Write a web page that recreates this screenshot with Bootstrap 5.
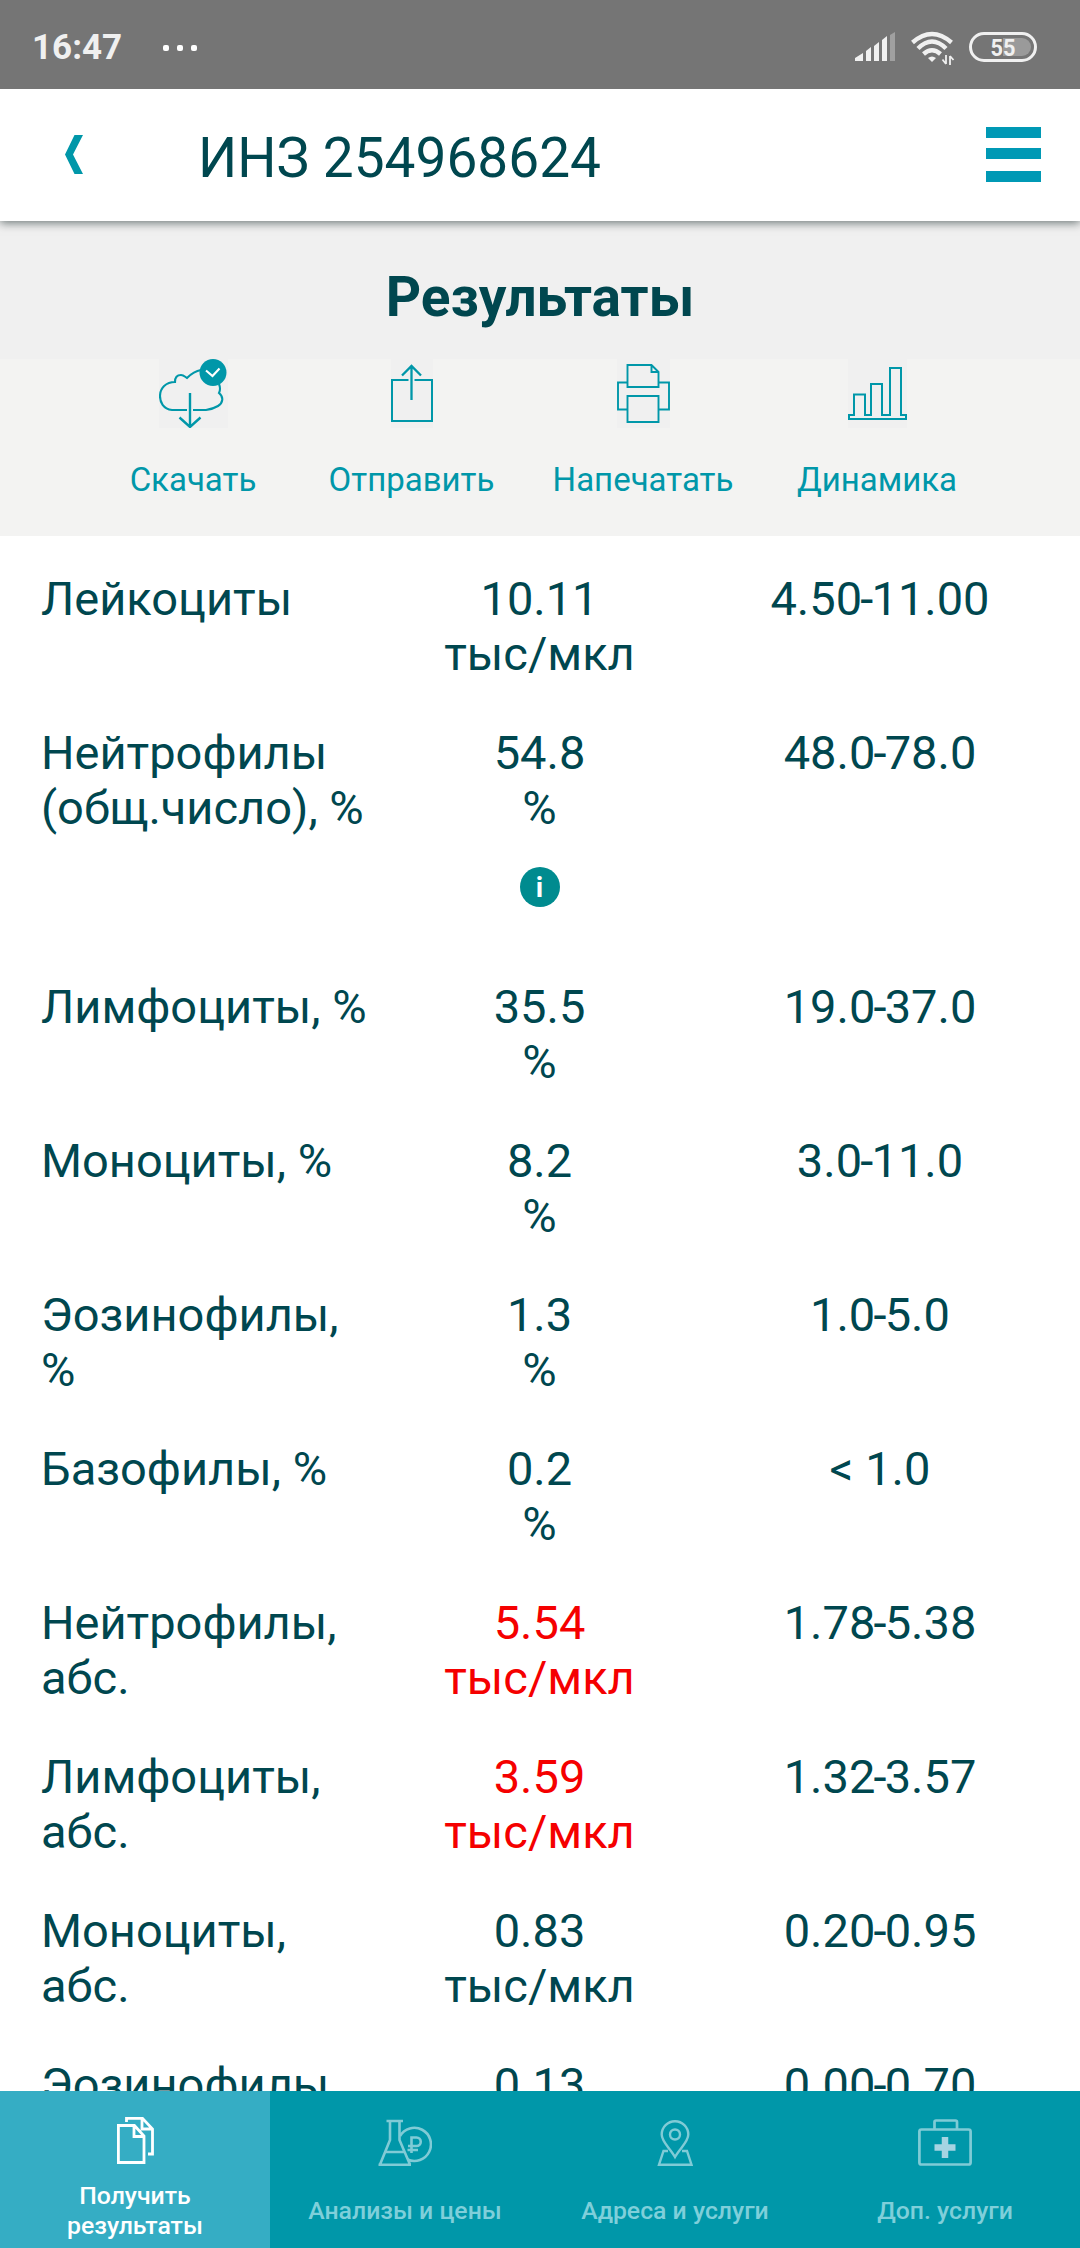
<!DOCTYPE html>
<html lang="ru">
<head>
<meta charset="utf-8">
<meta name="viewport" content="width=device-width, initial-scale=1">
<title>Результаты</title>
<link rel="stylesheet" href="https://cdn.jsdelivr.net/npm/bootstrap@5.3.0/dist/css/bootstrap.min.css">
<style>
:root{--ink:#00474f;--teal:#0097a9}
body{font-family:Roboto,"Noto Sans",sans-serif;color:var(--ink);background:#fff}
svg{display:block;flex:none}
.screen{width:1080px;height:2248px}
.statusbar{height:89px;background:#757575;color:#f0f0f0;padding:6px 43px 0 32px}
.clock{font-size:35px;font-weight:700;line-height:1}
.dots{margin-left:41px}
.appbar{height:132px;padding:0 39px 1px 65px;background:#fff;z-index:2;box-shadow:0 2px 9px rgba(0,20,20,.55);clip-path:inset(0 0 -20px 0)}
.appbar-title{font-size:55px;line-height:64px;margin-left:115px;padding-top:6px;font-weight:400}
.heading{height:138px;background:#f0f0f0;font-size:55px;font-weight:700;line-height:64px;padding-top:44px}
.actions{height:177px;background:#f3f3f2;padding-left:83px;color:var(--teal)}
.action{font-size:33px;line-height:39px}
.action svg{background:#f0f0f0;margin-bottom:32px}
.w-a{width:220px}.w-b{width:217px}.w-c{width:246px}.w-d{width:222px}
.results{font-size:47px;line-height:55px;padding:35px 0 0 41px}
.result{min-height:154px}
.c-name{width:345px}.c-val{width:307px}.c-ref{width:374px}
.c-ref i{font-style:normal;margin:0 -1.800px}
.high{color:#f50000}
.info-dot{width:40px;height:40px;background:#008b8f;color:#fff;font-size:28px;font-weight:700;margin:32px auto 72px}
.tabs{height:157px;background:var(--teal)}
.tab{width:270px;color:#7fcfda;font-size:24.800px;line-height:29.500px;font-weight:500;padding-top:25px}
.tab.active{background:#35adc4;color:#fff}
.tab-label{height:59px;margin-top:15px}
</style>
</head>
<body>
<div class="screen d-flex flex-column overflow-hidden">
  <header class="statusbar d-flex align-items-center flex-shrink-0">
    <span class="clock">16:47</span>
    <svg class="dots" width="34" height="6" fill="#fff"><rect width="6" height="6" rx="2"/><rect x="14" width="6" height="6" rx="2"/><rect x="28" width="6" height="6" rx="2"/></svg>
    <svg class="ms-auto" width="182" height="37" viewBox="856 29 182 37">
      <g fill="#f0f0f0"><path d="M856 61v-3l8-5v8zM867 61V51l5-4v14zM875 61V46l5-4v19zM883 61V40l5-4v25z"/><path d="M891 61V35l5-3v29z" fill="#a0a0a0"/></g>
      <g fill="none" stroke="#f0f0f0" stroke-width="4.400"><path d="M913.500 42.500q19.500-17 39 0M919 48.500q14-14 28 0M924.500 54q8.500-7.500 17 0"/></g>
      <path d="M929 58q4-3 8 0l-4 4z" fill="#f0f0f0"/>
      <path d="M947 55v9M943.500 59.500l3.500 4.500M951 65v-9M951 56l3.500 4" stroke="#f0f0f0" stroke-width="1.800" fill="none"/>
      <rect x="971.500" y="33.500" width="65" height="27" rx="13.500" fill="none" stroke="#f0f0f0" stroke-width="3"/>
      <path d="M1004 38h19a9 9 0 0 1 0 18h-19z" fill="#9a9a9a"/>
      <text x="1004" y="55.500" text-anchor="middle" font-size="24" font-weight="700" fill="#f0f0f0" textLength="25" lengthAdjust="spacingAndGlyphs">55</text>
    </svg>
  </header>
  <nav class="appbar d-flex align-items-center flex-shrink-0 position-relative">
    <svg width="18" height="39" viewBox="0 0 18 39"><path d="M9.500 0H18L8 19.500 18 39H9.500L0 19.500z" fill="var(--teal)"/></svg>
    <h1 class="appbar-title mb-0">ИНЗ 254968624</h1>
    <svg class="ms-auto" width="55" height="55" fill="#0099b5"><rect width="55" height="11"/><rect y="21" width="55" height="11"/><rect y="44" width="55" height="11"/></svg>
  </nav>
  <div class="heading text-center flex-shrink-0">Результаты</div>
  <div class="actions d-flex flex-shrink-0 text-center">
    <div class="action w-a d-flex flex-column align-items-center">
      <svg width="69" height="69" fill="none" stroke="currentColor" stroke-width="2.100"><path d="M28 51H13C4 50 1 43 1 37 1 29 7 23 16 23c0-4 2-7 6-7 3 0 4 2 6 3 4-4 8-7 14-8M60 25q2 5 0 9c5 4 4 10-1 13q-5 3-12 4H34"/><path d="M31 34v34M20.500 58.500L31 68l10.500-9.500" stroke-width="2.400"/><circle cx="54" cy="13.500" r="13.500" fill="currentColor" stroke="none"/><path d="M47 11.500l6.500 5.500 7-7.500" stroke="#fff"/></svg>
      <span>Скачать</span>
    </div>
    <div class="action w-b d-flex flex-column align-items-center">
      <svg width="42" height="69" fill="none" stroke="currentColor" stroke-width="2"><path d="M17.500 21H1v41h40V21H23.500"/><path d="M20.500 41V7M11 16.500l9.500-9.500 9.500 9.500" stroke-width="2.300"/></svg>
      <span>Отправить</span>
    </div>
    <div class="action w-c d-flex flex-column align-items-center">
      <svg width="53" height="69" fill="none" stroke="currentColor" stroke-width="1.900"><path d="M10.500 6h24l7 7v15h-31zM34.500 6v7h7M10.500 37h31v26h-31zM10.500 23.500H1v27h9.500M41.500 23.500H52v27H41.500"/></svg>
      <span>Напечатать</span>
    </div>
    <div class="action w-d d-flex flex-column align-items-center">
      <svg width="59" height="69" fill="none" stroke="currentColor" stroke-width="2"><path d="M1 60V56h5V35.500h11V56h6V25h11v31h8V9h11v47h5v4z"/></svg>
      <span>Динамика</span>
    </div>
  </div>
  <main class="results flex-grow-1 overflow-hidden">
    <div class="result d-flex"><div class="c-name">Лейкоциты</div><div class="c-val text-center">10.11<br>тыс/мкл</div><div class="c-ref text-center">4.50<i>-</i>11.00</div></div>
    <div class="result d-flex"><div class="c-name">Нейтрофилы<br>(общ.число), %</div><div class="c-val text-center">54.8<br>%<div class="info-dot rounded-circle d-flex align-items-center justify-content-center">i</div></div><div class="c-ref text-center">48.0<i>-</i>78.0</div></div>
    <div class="result d-flex"><div class="c-name">Лимфоциты, %</div><div class="c-val text-center">35.5<br>%</div><div class="c-ref text-center">19.0<i>-</i>37.0</div></div>
    <div class="result d-flex"><div class="c-name">Моноциты, %</div><div class="c-val text-center">8.2<br>%</div><div class="c-ref text-center">3.0<i>-</i>11.0</div></div>
    <div class="result d-flex"><div class="c-name">Эозинофилы,<br>%</div><div class="c-val text-center">1.3<br>%</div><div class="c-ref text-center">1.0<i>-</i>5.0</div></div>
    <div class="result d-flex"><div class="c-name">Базофилы, %</div><div class="c-val text-center">0.2<br>%</div><div class="c-ref text-center">&lt; 1.0</div></div>
    <div class="result d-flex"><div class="c-name">Нейтрофилы,<br>абс.</div><div class="c-val text-center high">5.54<br>тыс/мкл</div><div class="c-ref text-center">1.78<i>-</i>5.38</div></div>
    <div class="result d-flex"><div class="c-name">Лимфоциты,<br>абс.</div><div class="c-val text-center high">3.59<br>тыс/мкл</div><div class="c-ref text-center">1.32<i>-</i>3.57</div></div>
    <div class="result d-flex"><div class="c-name">Моноциты,<br>абс.</div><div class="c-val text-center">0.83<br>тыс/мкл</div><div class="c-ref text-center">0.20<i>-</i>0.95</div></div>
    <div class="result d-flex"><div class="c-name">Эозинофилы</div><div class="c-val text-center">0.13</div><div class="c-ref text-center">0.00<i>-</i>0.70</div></div>
  </main>
  <footer class="tabs d-flex flex-shrink-0 text-center">
    <div class="tab active d-flex flex-column align-items-center">
      <svg width="37" height="50" fill="none" stroke="#fff" stroke-width="2.800"><path d="M1.400 9.500h16L27 20v26.500H1.400zM17 9.500V20.500h10M9.500 6V2.400h16L35.500 13v25H31M25 2.400V13h10.500"/></svg>
      <div class="tab-label d-flex align-items-center">Получить<br>результаты</div>
    </div>
    <div class="tab d-flex flex-column align-items-center">
      <svg width="54" height="50" fill="none" stroke="#80cbd6" stroke-width="2.600"><path d="M8.500 5h16.500M12 5v19L2 48.500M21.500 5v19L32 48.500M.5 48.700h32.500M7 36h20"/><path d="M22 20a16.600 16.600 0 1 1 7.500 23.500"/><path d="M33.500 37V21.500h5a4 4 0 0 1 0 8.500H30M29.500 34h10.500"/></svg>
      <div class="tab-label d-flex align-items-center">Анализы и цены</div>
    </div>
    <div class="tab d-flex flex-column align-items-center">
      <svg width="36" height="50" fill="none" stroke="#80cbd6" stroke-width="2.400"><path d="M18 41C13 32 4.700 26 4.700 18.500a13.300 13.300 0 0 1 26.600 0c0 7.500-8.300 13.500-13.300 22.500z"/><circle cx="18" cy="18.500" r="5"/><path d="M11 35H6.500L2 48.700h32.500L30 35h-5"/></svg>
      <div class="tab-label d-flex align-items-center">Адреса и услуги</div>
    </div>
    <div class="tab d-flex flex-column align-items-center">
      <svg width="54" height="50" fill="none" stroke="#80cbd6" stroke-width="2.700"><rect x="1.400" y="13.500" width="51.200" height="35" rx="2"/><path d="M16.500 13V6q0-1.500 1.500-1.500h19.500Q39 4.500 39 6v7"/><path d="M27 21v21M16.500 31.500h21" stroke-width="6.500" stroke="#a5d4e2"/></svg>
      <div class="tab-label d-flex align-items-center">Доп. услуги</div>
    </div>
  </footer>
</div>
<script src="https://cdn.jsdelivr.net/npm/bootstrap@5.3.0/dist/js/bootstrap.bundle.min.js"></script>
</body>
</html>
